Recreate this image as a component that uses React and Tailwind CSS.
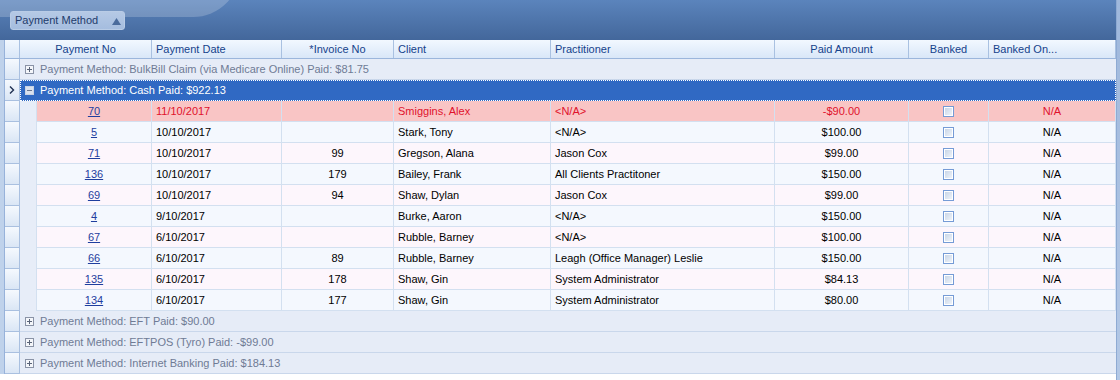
import React from "react";

const rows = [
  { no: "70", date: "11/10/2017", inv: "", client: "Smiggins, Alex", prac: "<N/A>", amt: "-$90.00", hl: true },
  { no: "5", date: "10/10/2017", inv: "", client: "Stark, Tony", prac: "<N/A>", amt: "$100.00" },
  { no: "71", date: "10/10/2017", inv: "99", client: "Gregson, Alana", prac: "Jason Cox", amt: "$99.00" },
  { no: "136", date: "10/10/2017", inv: "179", client: "Bailey, Frank", prac: "All Clients Practitoner", amt: "$150.00" },
  { no: "69", date: "10/10/2017", inv: "94", client: "Shaw, Dylan", prac: "Jason Cox", amt: "$99.00" },
  { no: "4", date: "9/10/2017", inv: "", client: "Burke, Aaron", prac: "<N/A>", amt: "$150.00" },
  { no: "67", date: "6/10/2017", inv: "", client: "Rubble, Barney", prac: "<N/A>", amt: "$100.00" },
  { no: "66", date: "6/10/2017", inv: "89", client: "Rubble, Barney", prac: "Leagh (Office Manager) Leslie", amt: "$150.00" },
  { no: "135", date: "6/10/2017", inv: "178", client: "Shaw, Gin", prac: "System Administrator", amt: "$84.13" },
  { no: "134", date: "6/10/2017", inv: "177", client: "Shaw, Gin", prac: "System Administrator", amt: "$80.00" },
];

function Indicator({ arrow }) {
  return (
    <div className="w-[15px] h-full shrink-0 border-r border-b border-[#a9c0e0] bg-gradient-to-b from-[#f5f9fe] to-[#dae6f5] flex items-center justify-center">
      {arrow && (
        <svg width="6" height="8" viewBox="0 0 6 8">
          <path d="M1 0.5 L4.5 4 L1 7.5" stroke="#1f3050" strokeWidth="1.4" fill="none" />
        </svg>
      )}
    </div>
  );
}

function ExpandBox({ minus, light }) {
  return (
    <svg width="9" height="9" viewBox="0 0 9 9" className="shrink-0">
      <rect x="0.5" y="0.5" width="8" height="8" fill={light ? "#d9e1ee" : "#f4f6fa"} stroke={light ? "#c8d2e4" : "#8a93a6"} />
      <path d="M2 4.5 H7" stroke={light ? "#6a7690" : "#5a6478"} strokeWidth="1" />
      {!minus && <path d="M4.5 2 V7" stroke="#5a6478" strokeWidth="1" />}
    </svg>
  );
}

function GroupRow({ text }) {
  return (
    <div className="h-[21px] flex">
      <Indicator />
      <div className="flex-1 h-full flex items-center gap-[6px] pl-[5px] bg-[#e6ecf7] border-b border-[#c9d7eb] text-[#6f7b95]">
        <ExpandBox />
        <span className="whitespace-nowrap">{text}</span>
      </div>
    </div>
  );
}

function CheckBox() {
  return (
    <span className="w-[11px] h-[11px] border border-[#759bd6] bg-white p-[1px] flex">
      <span className="flex-1 bg-gradient-to-br from-[#c9d6e8] to-[#eef3f9]" />
    </span>
  );
}

function DataRow({ r, i }) {
  const bg = r.hl ? "bg-[#f9c5c5]" : i % 2 === 1 ? "bg-[#f4f8fe]" : "bg-[#fdf6fc]";
  const txt = r.hl ? "text-[#e0122c]" : "text-black";
  const cell = "h-full border-r border-b border-[#d3e0f0] flex items-center whitespace-nowrap";
  return (
    <div className="h-[21px] flex">
      <Indicator />
      <div className="w-[17px] h-full bg-[#e7edf8] border-r border-[#d3e0f0] shrink-0" />
      <div className={`flex flex-1 h-full ${bg} ${txt}`}>
        <div className={`${cell} w-[115px] justify-center`}>
          <span className="text-[#1f3e9e] underline">{r.no}</span>
        </div>
        <div className={`${cell} w-[130px] pl-[4px]`}>{r.date}</div>
        <div className={`${cell} w-[112px] justify-center`}>{r.inv}</div>
        <div className={`${cell} w-[157px] pl-[4px]`}>{r.client}</div>
        <div className={`${cell} w-[224px] pl-[4px]`}>{r.prac}</div>
        <div className={`${cell} w-[134px] justify-center`}>{r.amt}</div>
        <div className={`${cell} w-[80px] justify-center`}>
          <CheckBox />
        </div>
        <div className={`${cell} w-[127px] justify-center`}>N/A</div>
      </div>
    </div>
  );
}

export default function App() {
  const hcell = "h-full border-r border-[#a9c1e1] flex items-center whitespace-nowrap";
  return (
    <div className="w-[1120px] h-[380px] bg-white flex overflow-hidden text-[11px] font-['Liberation_Sans',Arial,sans-serif]">
      <div className="w-[1116px] flex flex-col">
        {/* group panel */}
        <div className="h-[40px] relative overflow-hidden bg-gradient-to-b from-[#5b84bc] to-[#43679b]">
          <div className="absolute left-[-240px] top-[-77px] w-[480px] h-[94px] rounded-full bg-white/20" />
          <div className="absolute left-[10px] top-[11px] w-[115px] h-[19px] rounded-[3px] border border-[#b9cce6] bg-gradient-to-b from-[#b5c9e5] to-[#a5bddf] flex items-center pl-[4px] text-[#1e3b6b]">
            <span>Payment Method</span>
            <svg width="9" height="7" viewBox="0 0 9 7" className="absolute left-[101px] top-[6px]">
              <path d="M4.5 0 L9 7 H0 Z" fill="#4a6b9c" />
            </svg>
          </div>
        </div>
        {/* grid */}
        <div className="flex">
          <div className="w-[5px] h-[334px] bg-[#bfd2eb] border-r border-[#97b2da] shrink-0" />
          <div className="flex-1 flex flex-col">
            {/* header */}
            <div className="h-[19px] flex bg-gradient-to-b from-[#f2f8ff] to-[#d9e7f8] border-b border-[#9bb6dc] text-[#15428b] rounded-tr-[4px]">
              <div className="w-[15px] h-full border-r border-[#a9c1e1] shrink-0" />
              <div className={`${hcell} w-[132px] justify-center`}>Payment No</div>
              <div className={`${hcell} w-[130px] pl-[4px]`}>Payment Date</div>
              <div className={`${hcell} w-[112px] justify-center`}>*Invoice No</div>
              <div className={`${hcell} w-[157px] pl-[4px]`}>Client</div>
              <div className={`${hcell} w-[224px] pl-[4px]`}>Practitioner</div>
              <div className={`${hcell} w-[134px] justify-center`}>Paid Amount</div>
              <div className={`${hcell} w-[80px] justify-center`}>Banked</div>
              <div className={`${hcell} w-[127px] pl-[4px]`}>Banked On...</div>
            </div>
            <GroupRow text="Payment Method: BulkBill Claim (via Medicare Online) Paid: $81.75" />
            <div className="h-[21px] flex">
              <Indicator arrow />
              <div className="flex-1 h-full flex items-center gap-[6px] pl-[4px] bg-[#3069c3] border border-dotted border-white text-white">
                <ExpandBox minus light />
                <span className="whitespace-nowrap">Payment Method: Cash Paid: $922.13</span>
              </div>
            </div>
            {rows.map((r, i) => (
              <DataRow key={r.no} r={r} i={i} />
            ))}
            <GroupRow text="Payment Method: EFT Paid: $90.00" />
            <GroupRow text="Payment Method: EFTPOS (Tyro) Paid: -$99.00" />
            <GroupRow text="Payment Method: Internet Banking Paid: $184.13" />
          </div>
        </div>
      </div>
      <div className="w-[4px] h-full bg-gradient-to-b from-[#9fb8dc] to-[#b3c8e6] border-l border-[#8eaad3]" />
    </div>
  );
}
